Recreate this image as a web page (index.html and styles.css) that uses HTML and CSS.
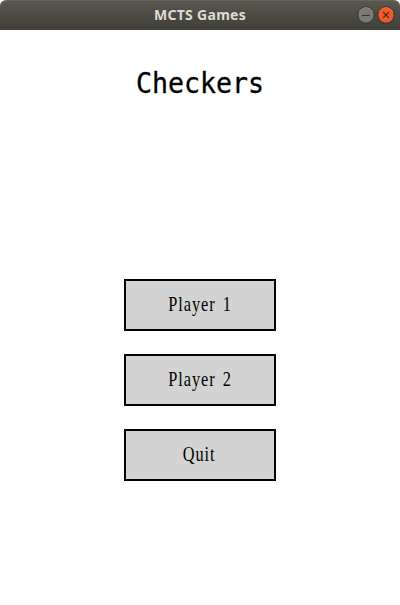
FILE: index.html
```html
<!DOCTYPE html>
<html lang="en">
<head>
<meta charset="utf-8">
<title>MCTS Games</title>
<link rel="stylesheet" href="styles.css">
</head>
<body>
<div class="window">
  <header class="titlebar">
    <span class="caption">MCTS Games</span>
    <div class="controls">
      <svg class="control" viewBox="0 0 18 18"><circle cx="9" cy="9" r="8.2" fill="#7b7973" stroke="#33322d"/><path d="M2.2 6.5a7.2 7.2 0 0 1 13.6 0" fill="none" stroke="#96948d" stroke-width=".7"/><path d="M5 9.5h8" stroke="#34332e"/></svg>
      <svg class="control" viewBox="0 0 18 18"><circle cx="9" cy="9" r="8.2" fill="#ed5b2d" stroke="#3b2d25"/><path d="M2.2 6.5a7.2 7.2 0 0 1 13.6 0" fill="none" stroke="#fa8257" stroke-width=".7"/><path d="M6.2 6.2l5.6 5.6M11.8 6.2l-5.6 5.6" stroke="#3a2720" stroke-width="1.2"/></svg>
    </div>
  </header>
  <main class="screen">
    <h1 class="heading">Checkers</h1>
    <nav class="menu">
      <button class="choice"><span class="label">Player 1</span></button>
      <button class="choice"><span class="label">Player 2</span></button>
      <button class="choice"><span class="label">Quit</span></button>
    </nav>
  </main>
</div>
</body>
</html>
```
FILE: styles.css
```css
* { box-sizing: border-box; }
body { margin: 0; background: #fff; }
.window { height: 605px; display: flex; flex-direction: column; overflow: hidden; }
.titlebar {
  height: 30px;
  display: grid;
  grid-template-columns: 1fr auto 1fr;
  align-items: center;
  padding: 0 5px;
  border-radius: 6px 6px 0 0;
  border-top: 1px solid #66645b;
  background: linear-gradient(#59574e, #3f3e38);
}
.caption {
  grid-column: 2;
  margin-top: -2px;
  font: bold 14px/28px "Noto Sans", sans-serif;
  letter-spacing: .3px;
  color: #dfdbd2;
}
.controls { display: flex; gap: 2px; justify-content: flex-end; margin-top: -1px; }
.control { width: 18px; height: 18px; }
.screen { flex: 1; display: flex; flex-direction: column; align-items: center; }
.heading {
  margin: 36px 0 0;
  font: 26.6px/36px "DejaVu Sans Mono", monospace;
  color: #000;
  transform: scaleY(1.05);
  -webkit-text-stroke: .3px #000;
}
.menu { margin-top: 177px; display: flex; flex-direction: column; gap: 23px; }
.choice {
  width: 152px;
  height: 52px;
  padding: 0 2px 0 0;
  border: 2px solid #000;
  background: #d3d3d3;
  color: #000;
  font: 19px/24px "Liberation Serif", serif;
}
.label {
  display: inline-block;
  transform: scale(.86, 1.06);
  letter-spacing: 1.1px;
  margin-right: -1.1px;
  word-spacing: 2.5px;
}
```
